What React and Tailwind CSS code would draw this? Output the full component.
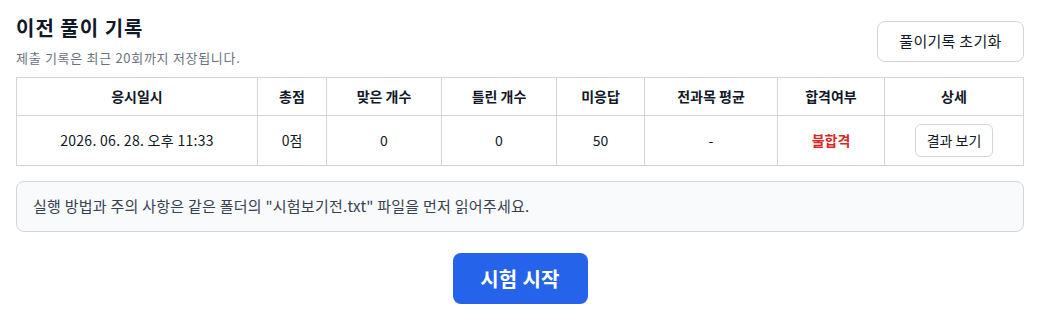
export default function App() {
  const cols = [
    { label: '응시일시', w: 'w-[241px]' },
    { label: '총점', w: 'w-[69px]' },
    { label: '맞은 개수', w: 'w-[115px]' },
    { label: '틀린 개수', w: 'w-[115px]' },
    { label: '미응답', w: 'w-[88px]' },
    { label: '전과목 평균', w: 'w-[133px]' },
    { label: '합격여부', w: 'w-[107px]' },
    { label: '상세', w: '' },
  ];

  return (
    <div className="pl-4 pr-[14px] pt-[14px] bg-white text-[#111827]" style={{ fontFamily: '"Noto Sans CJK KR", "Noto Sans", sans-serif' }}>
      <div className="flex items-start justify-between">
        <div>
          <h2 className="text-[20px] font-bold leading-[28px] tracking-[1px]">이전 풀이 기록</h2>
          <p className="text-[13px] text-[#6b7280] mt-[6px] leading-[20px] tracking-[0.7px]">제출 기록은 최근 20회까지 저장됩니다.</p>
        </div>
        <button className="mt-[7px] h-[41px] w-[147px] border border-[#d1d5db] rounded-lg bg-white text-[15px] text-[#111827] tracking-[0.3px]">
          풀이기록 초기화
        </button>
      </div>

      <table className="mt-[9px] w-full table-fixed border-collapse text-[14px]">
        <thead>
          <tr>
            {cols.map((c) => (
              <th key={c.label} className={`${c.w} h-[38px] border border-[#d1d5db] font-bold text-center`}>{c.label}</th>
            ))}
          </tr>
        </thead>
        <tbody>
          <tr>
            <td className="h-[50px] border border-[#d1d5db] text-center tracking-[0.3px]">2026. 06. 28. 오후 11:33</td>
            <td className="border border-[#d1d5db] text-center">0점</td>
            <td className="border border-[#d1d5db] text-center">0</td>
            <td className="border border-[#d1d5db] text-center">0</td>
            <td className="border border-[#d1d5db] text-center">50</td>
            <td className="border border-[#d1d5db] text-center">-</td>
            <td className="border border-[#d1d5db] text-center font-bold text-[#dc2626]">불합격</td>
            <td className="border border-[#d1d5db] text-center">
              <button className="h-[33px] w-[78px] border border-[#d1d5db] rounded-md bg-white text-[14px]">결과 보기</button>
            </td>
          </tr>
        </tbody>
      </table>

      <div className="mt-[15px] h-[51px] flex items-center px-4 bg-[#f8fafc] border border-[#d1d5db] rounded-lg text-[15px] text-[#374151] tracking-[0.25px]">
        실행 방법과 주의 사항은 같은 폴더의 "시험보기전.txt" 파일을 먼저 읽어주세요.
      </div>

      <div className="flex justify-center mt-[21px]">
        <button className="w-[135px] h-[51px] rounded-lg bg-[#2563eb] text-white text-[20px] font-bold tracking-[0.3px]">시험 시작</button>
      </div>
    </div>
  );
}
